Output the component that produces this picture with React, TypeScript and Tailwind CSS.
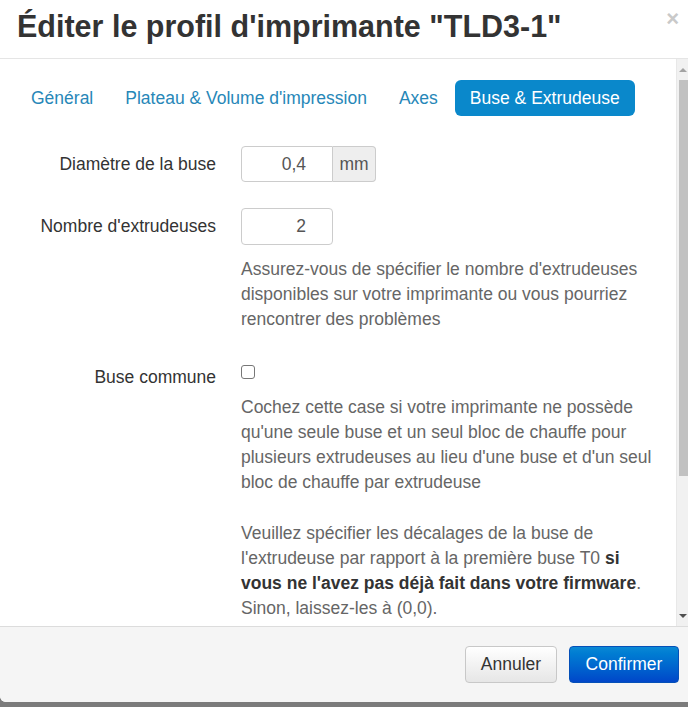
const TABS = ["Général", "Plateau & Volume d'impression", "Axes", "Buse & Extrudeuse"];

function Scrollbar() {
  return (
    <div className="w-[12px] shrink-0 bg-[#f1f1f1] border-l border-[#e8e8e8] flex flex-col items-center">
      <div className="h-[21px] flex items-center justify-center">
        <div className="w-0 h-0 border-l-[4px] border-r-[4px] border-b-[4px] border-l-transparent border-r-transparent border-b-[#a3a3a3]" />
      </div>
      <div className="w-[10px] ml-[2px] h-[396px] bg-[#c1c1c1]" />
      <div className="flex-1" />
      <div className="h-[21px] flex items-center justify-center">
        <div className="w-0 h-0 border-l-[4px] border-r-[4px] border-t-[4px] border-l-transparent border-r-transparent border-t-[#505050]" />
      </div>
    </div>
  );
}

function Row({ label, children }: { label: string; children: React.ReactNode }) {
  return (
    <div className="flex">
      <div className="w-[216px] shrink-0 text-right text-[#333] h-[36px] leading-[36px]">{label}</div>
      <div className="ml-[25px] flex-1">{children}</div>
    </div>
  );
}

export default function App() {
  return (
    <div
      className="w-[688px] h-[707px] overflow-hidden bg-[#7b7b7b] text-[17.5px]"
      style={{ fontFamily: '"Liberation Sans", Arial, sans-serif' }}
    >
      <div className="h-[702px] bg-white rounded-bl-[6px] flex flex-col">
        {/* header */}
        <div className="h-[59px] shrink-0 border-b border-[#e5e5e5] flex items-start justify-between">
          <h3 className="pl-[17px] pt-[6px] text-[30.5px] font-bold text-[#333] leading-[40px] whitespace-nowrap">
            Éditer le profil d'imprimante "TLD3-1"
          </h3>
          <span className="mr-[9px] mt-[7px] text-[22px] font-bold text-[#c9c9c9] leading-[24px]">×</span>
        </div>

        {/* body */}
        <div className="flex-1 flex overflow-hidden">
          <div className="flex-1 overflow-hidden">
            <ul className="flex pl-[16px] pt-[21px]">
              {TABS.map((t, i) => {
                const active = i === TABS.length - 1;
                return (
                  <li key={t} className={i > 0 ? "ml-[2px]" : ""}>
                    <a
                      className={
                        active
                          ? "block h-[36px] leading-[36px] px-[15px] rounded-[6px] bg-[#0a88cb] text-white"
                          : "block h-[36px] leading-[36px] px-[15px] text-[#2787b8]"
                      }
                    >
                      {t}
                    </a>
                  </li>
                );
              })}
            </ul>

            <div className="mt-[30px]">
              <Row label="Diamètre de la buse">
                <div className="flex h-[36px] w-[135px]">
                  <div className="w-[92px] border border-[#ccc] rounded-l-[4px] text-right pr-[26px] leading-[34px] text-[#555]">0,4</div>
                  <div className="flex-1 border border-l-0 border-[#ccc] rounded-r-[4px] bg-[#eee] text-center leading-[34px] text-[#555]">mm</div>
                </div>
              </Row>

              <div className="mt-[26px]">
                <Row label="Nombre d'extrudeuses">
                  <div className="w-[92px] h-[37px] border border-[#ccc] rounded-[4px] text-right pr-[26px] leading-[35px] text-[#555]">2</div>
                  <p className="mt-[12px] leading-[25px] text-[#666] pr-[20px]">
                    Assurez-vous de spécifier le nombre d'extrudeuses disponibles sur votre imprimante ou vous pourriez rencontrer des problèmes
                  </p>
                </Row>
              </div>

              <div className="mt-[27px]">
                <Row label="Buse commune">
                  <div className="h-[36px] pt-[6px]">
                    <div className="w-[14px] h-[14px] border border-[#777] rounded-[3px] bg-white" />
                  </div>
                  <p className="mt-0 leading-[25px] text-[#666] pr-[20px]">
                    Cochez cette case si votre imprimante ne possède qu'une seule buse et un seul bloc de chauffe pour plusieurs extrudeuses au lieu d'une buse et d'un seul bloc de chauffe par extrudeuse
                  </p>
                  <p className="mt-[26px] leading-[25px] text-[#666] pr-[20px]">
                    Veuillez spécifier les décalages de la buse de l'extrudeuse par rapport à la première buse T0{" "}
                    <b className="text-[#333]">si vous ne l'avez pas déjà fait dans votre firmware</b>. Sinon, laissez-les à (0,0).
                  </p>
                </Row>
              </div>
            </div>
          </div>
          <Scrollbar />
        </div>

        {/* footer */}
        <div className="h-[76px] shrink-0 border-t border-[#dcdcdc] bg-[#f5f5f5] rounded-bl-[6px] flex justify-end items-start pt-[19px] pr-[9px] gap-[12px]">
          <button className="w-[92px] h-[37px] rounded-[4px] border border-[#c8c8c8] bg-gradient-to-b from-white to-[#e6e6e6] text-[#333]">
            Annuler
          </button>
          <button className="w-[110px] h-[37px] rounded-[4px] border border-[#0550b8] bg-gradient-to-b from-[#0a88d4] to-[#0346c9] text-white">
            Confirmer
          </button>
        </div>
      </div>
    </div>
  );
}
